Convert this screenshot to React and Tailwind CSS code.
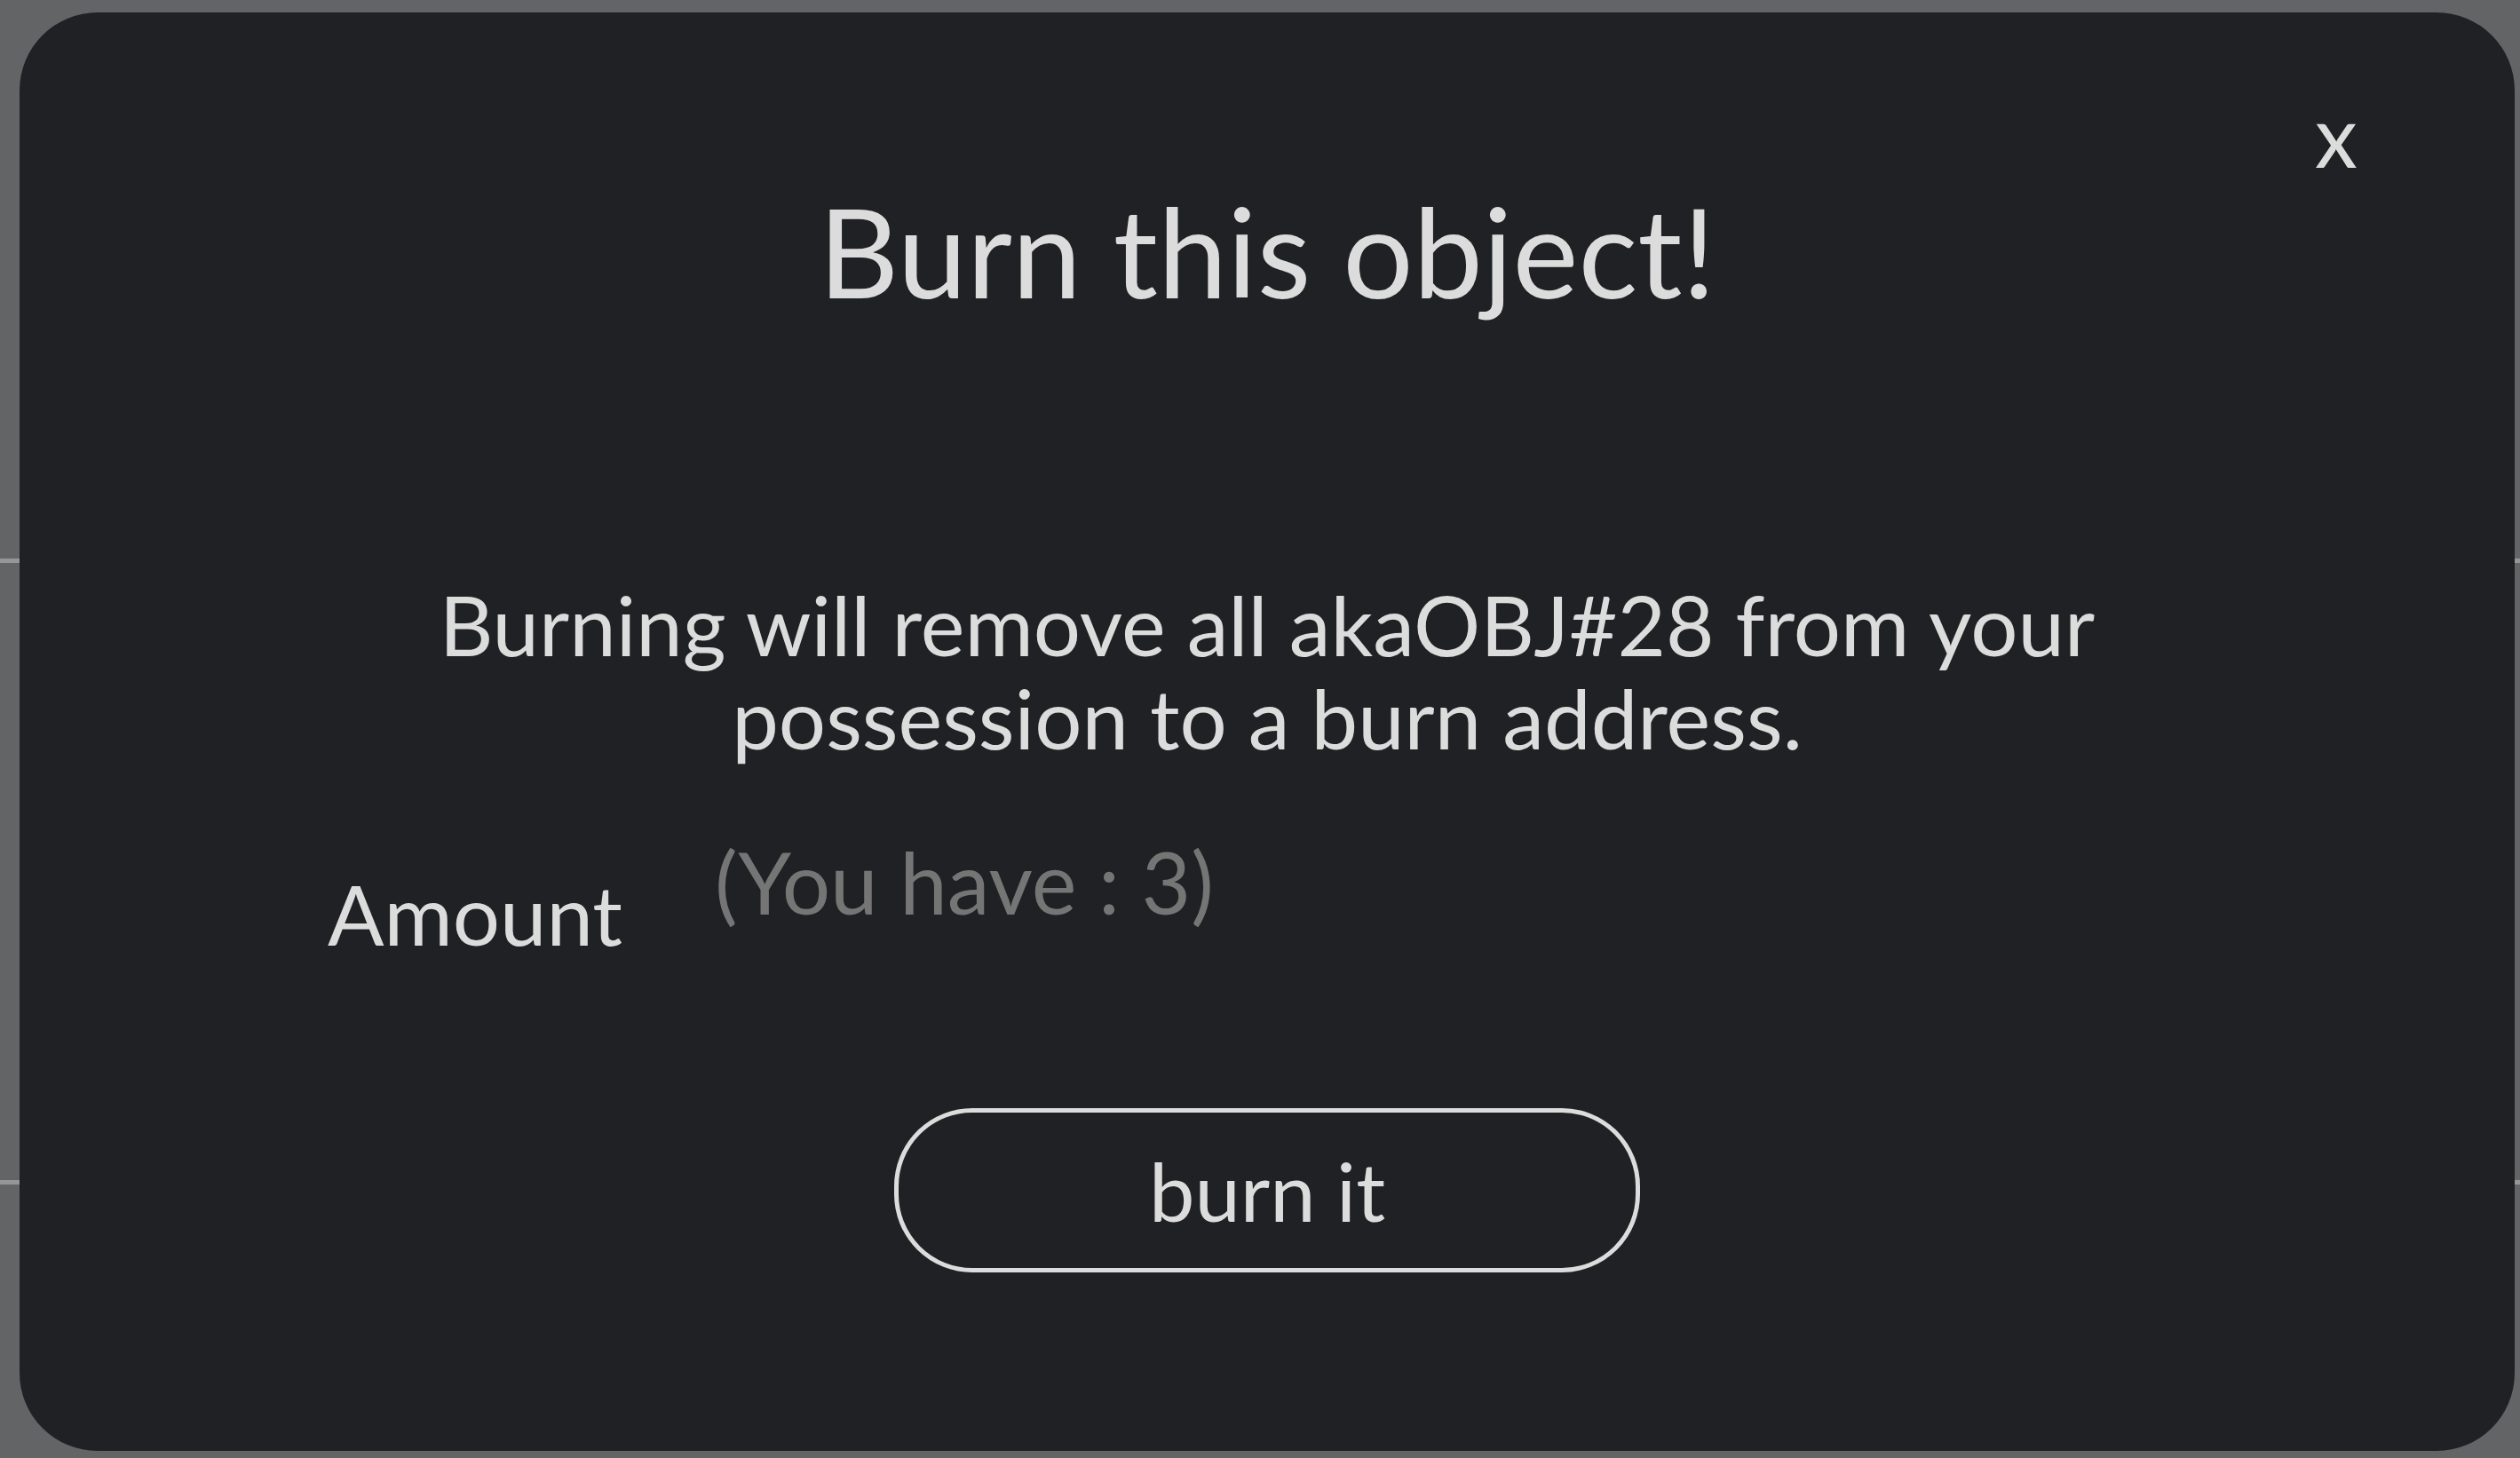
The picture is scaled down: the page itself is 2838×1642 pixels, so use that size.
import React from "react";

export default function App() {
  return (
    <div className="flex min-h-screen flex-col bg-[linear-gradient(#969696,#969696),linear-gradient(#969696,#969696)] bg-[length:100%_5px] bg-[position:0_629px,0_1329px] bg-no-repeat bg-[#636466] pt-[14px] pr-[6px] pb-2 pl-[22px] font-['Lato',sans-serif] text-[#dcdcdc]">
      <main
        role="dialog"
        aria-labelledby="burn-title"
        className="flex grow flex-col rounded-[88px] bg-[#202124] px-[345px] pb-[200px]"
      >
        <div className="-mr-[184px] flex justify-end pt-[88px]">
          <button type="button" aria-label="Close" className="w-[80px] text-center text-[96px] leading-[100px]">
            x
          </button>
        </div>
        <h1 id="burn-title" className="text-center text-[140px] leading-[160px]">
          Burn this object!
        </h1>
        <p className="mx-auto mt-[288px] max-w-[2000px] text-center text-[94px] leading-[105px]">
          Burning will remove all akaOBJ#28 from your possession to a burn address.
        </p>
        <div className="mt-[78px] flex items-start">
          <label htmlFor="amount" className="w-[438px] pt-[36px] pl-[2px] text-[94px] leading-[110px]">
            Amount
          </label>
          <input
            id="amount"
            type="text"
            placeholder="(You have : 3)"
            className="h-[110px] w-[1000px] bg-transparent text-[96px] outline-none placeholder:text-[#757575]"
          />
        </div>
        <button
          type="button"
          className="mx-auto mt-[164px] h-[185px] w-[840px] rounded-[88px] border-[5px] border-[#dcdcdc] text-[92px] leading-[110px]"
        >
          burn it
        </button>
      </main>
    </div>
  );
}
